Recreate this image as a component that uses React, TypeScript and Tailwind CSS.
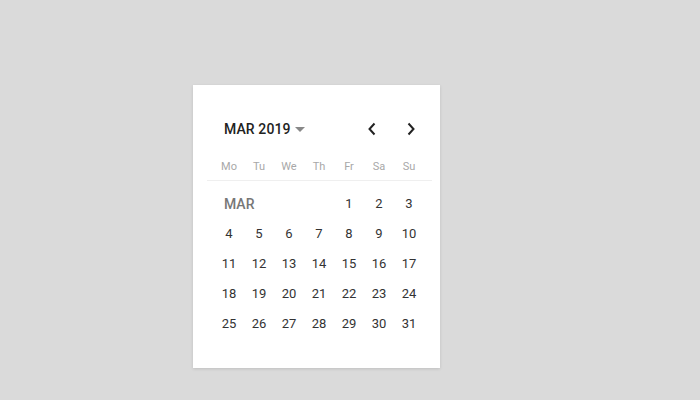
import React from "react";

const weekdays = ["Mo", "Tu", "We", "Th", "Fr", "Sa", "Su"];

export default function App() {
  const cells: (number | null)[] = [null, null, null, null];
  for (let d = 1; d <= 31; d++) cells.push(d);
  const rows: (number | null)[][] = [];
  for (let i = 0; i < cells.length; i += 7) rows.push(cells.slice(i, i + 7));

  return (
    <div
      className="w-[700px] h-[400px] bg-[#dadada] pl-[193px] pt-[85px]"
      style={{ fontFamily: "Roboto, 'Liberation Sans', sans-serif" }}
    >
      <div className="w-[247px] h-[283px] bg-white shadow-[0_1px_3px_rgba(0,0,0,0.12)] pt-[32px] flex flex-col">
        <div className="ml-[21px] w-[210px] h-[24px] flex items-center">
          <div className="ml-[10px] flex items-center text-[14px] font-medium text-[#222] tracking-[0.1px]">
            MAR 2019
            <svg width="10" height="6" viewBox="0 0 10 6" className="ml-[4px] mt-[1px]">
              <path d="M0 0 L10 0 L5 5 Z" fill="#888" />
            </svg>
          </div>
          <div className="ml-auto flex items-center gap-[15px] mr-[1px]">
            <button className="w-[24px] h-[24px] flex items-center justify-center">
              <svg width="10" height="14" viewBox="0 0 10 14">
                <path d="M7.5 1.5 L2.5 7 L7.5 12.5" fill="none" stroke="#222" strokeWidth="2" />
              </svg>
            </button>
            <button className="w-[24px] h-[24px] flex items-center justify-center">
              <svg width="10" height="14" viewBox="0 0 10 14">
                <path d="M2.5 1.5 L7.5 7 L2.5 12.5" fill="none" stroke="#222" strokeWidth="2" />
              </svg>
            </button>
          </div>
        </div>
        <div className="ml-[21px] mt-[16px] grid grid-cols-[repeat(7,30px)] h-[20px] items-center">
          {weekdays.map((w) => (
            <div key={w} className="text-center text-[11px] text-[#a8a8a8]">
              {w}
            </div>
          ))}
        </div>
        <div className="ml-[14px] mt-[3px] w-[225px] h-[1px] bg-[#efefef]" />
        <div className="ml-[21px] mt-[8px] flex flex-col">
          {rows.map((row, ri) => (
            <div key={ri} className="grid grid-cols-[repeat(7,30px)] h-[30px] items-center">
              {ri === 0 && (
                <div className="col-span-4 pl-[10px] text-[14px] font-medium text-[#777]">MAR</div>
              )}
              {row.map((d, ci) =>
                d === null ? null : (
                  <div key={ci} className="text-center text-[13px] text-[#333]">
                    {d}
                  </div>
                )
              )}
            </div>
          ))}
        </div>
      </div>
    </div>
  );
}
